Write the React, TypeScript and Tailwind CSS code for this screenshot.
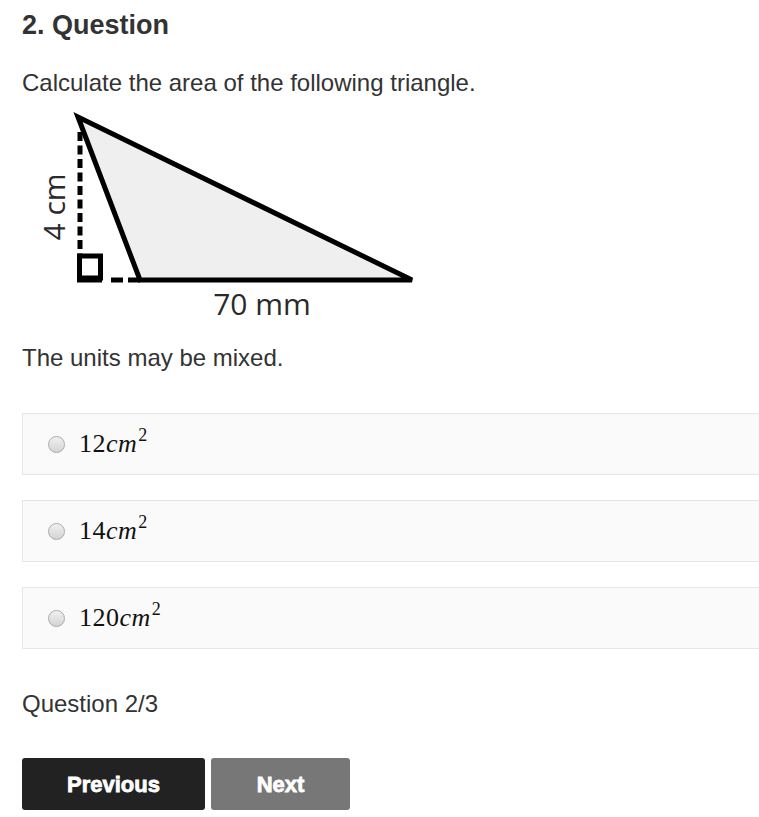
import React from "react";

const OPTIONS = ["12", "14", "120"];

function Triangle() {
  return (
    <svg width="420" height="215" viewBox="0 0 420 215" className="mt-[13px] block">
      <polygon points="56,7 118,170 390,170" fill="#efefef" stroke="#000" strokeWidth="5" strokeLinejoin="miter" />
      {/* height, dashed */}
      <line x1="58" y1="22" x2="58" y2="145" stroke="#000" strokeWidth="5" strokeDasharray="9 4.5" />
      <rect x="57.5" y="146" width="21" height="22" fill="#fff" stroke="#000" strokeWidth="5" />
      <line x1="55" y1="170" x2="80" y2="170" stroke="#000" strokeWidth="5" />
      <line x1="89" y1="170" x2="101" y2="170" stroke="#000" strokeWidth="5" />
      <line x1="106" y1="170" x2="118" y2="170" stroke="#000" strokeWidth="5" />
      <text
        x="31"
        y="97"
        transform="rotate(-90 31 97)"
        textAnchor="middle"
        dominantBaseline="central"
        fontFamily="'Open Sans', sans-serif"
        fontWeight="400"
        fontSize="30"
        fill="#2a2a2a"
      >
        4 cm
      </text>
      <text
        x="240"
        y="205"
        textAnchor="middle"
        fontFamily="'Open Sans', sans-serif"
        fontWeight="400"
        fontSize="30"
        fill="#2a2a2a"
      >
        70 mm
      </text>
    </svg>
  );
}

function Option({ value }: { value: string }) {
  return (
    <div className="flex h-[62px] items-center border border-r-0 border-[#e6e6e6] bg-[#fafafa] pl-[25px]">
      <span className="h-[17px] w-[17px] rounded-full border border-[#aaa] bg-gradient-to-b from-[#f0f0f0] to-[#d4d4d4]" />
      <span className="ml-[14px] font-['Liberation_Serif',serif] text-[26px] leading-none tracking-[0.5px] text-[#111]">
        {value}
        <i>cm</i>
        <sup className="relative -top-[11px] ml-[1px] align-baseline text-[18px]">2</sup>
      </span>
    </div>
  );
}

export default function App() {
  return (
    <div className="min-h-screen bg-white pl-[22px] pt-[9px] font-['Liberation_Sans',Arial,sans-serif] text-[#333]">
      <h2 className="text-[27px] font-bold leading-[32px]">2. Question</h2>
      <p className="mt-[28px] text-[24px] leading-[28px]">Calculate the area of the following triangle.</p>
      <Triangle />
      <p className="mt-[19px] text-[24px] leading-[28px]">The units may be mixed.</p>
      <div className="mt-[41px] flex flex-col gap-[25px]">
        {OPTIONS.map((o) => (
          <Option key={o} value={o} />
        ))}
      </div>
      <p className="mt-[41px] text-[24px] leading-[28px]">Question 2/3</p>
      <div className="mt-[40px] flex gap-[6px]">
        <button className="h-[52px] w-[183px] rounded-[3px] bg-[#222] text-[22px] font-bold text-white [-webkit-text-stroke:0.8px_#fff]">
          Previous
        </button>
        <button className="h-[52px] w-[139px] rounded-[3px] bg-[#777] text-[22px] font-bold text-white [-webkit-text-stroke:0.8px_#fff]">
          Next
        </button>
      </div>
    </div>
  );
}
